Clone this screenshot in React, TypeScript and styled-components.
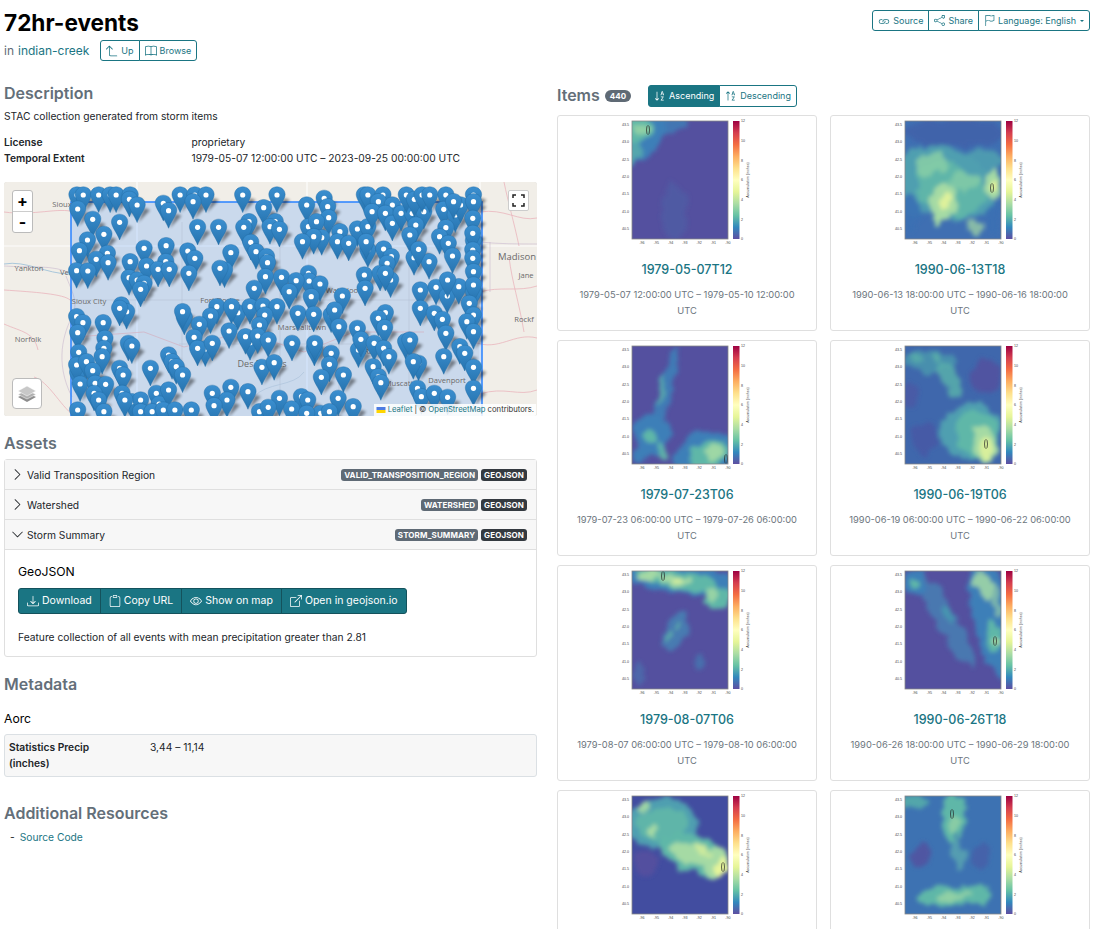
import React from "react";
import styled, { createGlobalStyle } from "styled-components";
import {
  BsArrow90DegUp,
  BsBook,
  BsBoxArrowUpRight,
  BsChevronDown,
  BsChevronRight,
  BsClipboard,
  BsDownload,
  BsEye,
  BsFlag,
  BsLink,
  BsShare,
  BsSortAlphaDown,
  BsSortAlphaUp,
} from "react-icons/bs";

const TEAL = "#1a7583";

const GlobalStyle = createGlobalStyle`
  html, body { margin: 0; padding: 0; background: #fff; }
  body {
    font-family: Inter, "Liberation Sans", sans-serif;
    font-size: 10.25px;
    line-height: 16px;
    color: #212529;
    overflow: hidden;
  }
  a { color: ${TEAL}; text-decoration: none; }
`;

const Page = styled.div`
  width: 1086px;
  height: 929px;
  padding: 0 6px 0 4px;
  overflow: hidden;
`;

const Header = styled.header`
  display: flex;
  justify-content: space-between;
  align-items: flex-start;
  height: 83px;
`;

const Title = styled.h1`
  margin: 8px 0 0;
  font-size: 22.6px;
  line-height: 29px;
  font-weight: 700;
  color: #000;
`;

const Parent = styled.div`
  display: flex;
  align-items: center;
  margin-top: 3px;
  color: #5f6b75;
  font-size: 12px;
  line-height: 20px;
`;

const ParentLink = styled.a`
  margin-left: 4px;
  margin-right: 11px;
`;

const BtnGroup = styled.div`
  display: inline-flex;
  border-radius: 3px;
`;

const OutlineBtn = styled.span<{ $active?: boolean; $h?: number; $px?: number }>`
  display: inline-flex;
  align-items: center;
  gap: 3px;
  height: ${(p) => p.$h ?? 21}px;
  box-sizing: border-box;
  padding: 0 ${(p) => p.$px ?? 5}px;
  border: 1px solid ${TEAL};
  margin-left: -1px;
  background: ${(p) => (p.$active ? TEAL : "#fff")};
  color: ${(p) => (p.$active ? "#fff" : TEAL)};
  font-size: 9px;
  white-space: nowrap;
  &:first-child { margin-left: 0; border-radius: 3px 0 0 3px; }
  &:last-child { border-radius: 0 3px 3px 0; }
  svg { flex: none; }
`;

const Caret = styled.i`
  width: 0;
  height: 0;
  margin-left: 1px;
  border-top: 2.5px solid ${TEAL};
  border-left: 2.5px solid transparent;
  border-right: 2.5px solid transparent;
`;

const Actions = styled(BtnGroup)`
  margin-top: 10px;
`;

const Columns = styled.div`
  display: grid;
  grid-template-columns: 533px 533px;
  column-gap: 20px;
`;

const Column = styled.section``;

const SectionTitle = styled.h2<{ $top?: number }>`
  margin: ${(p) => p.$top ?? 0}px 0 0;
  font-size: 16px;
  line-height: 20px;
  font-weight: 600;
  color: #646f79;
`;

const Paragraph = styled.p`
  margin: 5px 0 0;
`;

const InfoGrid = styled.dl`
  display: grid;
  grid-template-columns: 187.5px 1fr;
  margin: 10px 0 0;
`;

const Term = styled.dt`
  font-weight: 600;
`;

const Detail = styled.dd`
  margin: 0;
`;

const MapFrame = styled.div`
  position: relative;
  height: 234px;
  margin-top: 16px;
  border-radius: 3px;
  box-shadow: inset 0 0 0 1px #ddd;
  overflow: hidden;
  background: #f2efe9;
  svg.map { display: block; }
`;

const ZoomControl = styled.div`
  position: absolute;
  top: 8px;
  left: 8px;
  width: 21px;
  box-sizing: border-box;
  border: 1px solid #bbb;
  border-radius: 3px;
  background: #fff;
  color: #000;
  font-weight: 700;
  text-align: center;
`;

const ZoomButton = styled.div`
  height: 20px;
  line-height: 20px;
  font-size: 16px;
  & + & { border-top: 1px solid #ccc; }
`;

const FullscreenBtn = styled.div`
  position: absolute;
  top: 8px;
  right: 8px;
  width: 21px;
  height: 21px;
  box-sizing: border-box;
  display: flex;
  align-items: center;
  justify-content: center;
  background: #fff;
  border: 1px solid #ccc;
  border-radius: 2px;
`;

const LayersBtn = styled.div`
  position: absolute;
  left: 8px;
  bottom: 7px;
  width: 30px;
  height: 31px;
  box-sizing: border-box;
  display: flex;
  align-items: center;
  justify-content: center;
  background: #fff;
  border: 1px solid #bbb;
  border-radius: 4px;
`;

const Attribution = styled.div`
  position: absolute;
  right: 1px;
  bottom: 0;
  height: 12px;
  padding: 0 2px;
  display: flex;
  align-items: center;
  gap: 2px;
  background: rgba(255, 255, 255, 0.85);
  font-size: 7.7px;
  line-height: 12px;
  color: #333;
`;

const Accordion = styled.div`
  margin-top: 6px;
  border: 1px solid #dfdfdf;
  border-radius: 3px;
`;

const AccordionRow = styled.div`
  display: flex;
  align-items: center;
  height: 29px;
  padding: 0 9px 0 6px;
  background: #f7f7f7;
  border-bottom: 1px solid #dfdfdf;
`;

const RowLabel = styled.span`
  margin-left: 3px;
  flex: 1;
`;

const Badge = styled.span<{ $dark?: boolean }>`
  display: inline-block;
  margin-left: 3px;
  padding: 0 3px;
  height: 12px;
  line-height: 12px;
  border-radius: 3px;
  background: ${(p) => (p.$dark ? "#343a40" : "#5f6a75")};
  color: #fff;
  font-size: 8px;
  font-weight: 700;
  letter-spacing: 0.1px;
`;

const AccordionBody = styled.div`
  padding: 14px 13px 11px;
`;

const AssetTitle = styled.h4`
  margin: 0;
  font-size: 12.2px;
  line-height: 16px;
  font-weight: 400;
  color: #000;
`;

const SolidBtn = styled.span`
  display: inline-flex;
  align-items: center;
  gap: 3px;
  height: 26px;
  padding: 0 8px;
  box-sizing: border-box;
  border: 1px solid #14525c;
  margin-left: -1px;
  background: ${TEAL};
  color: #fff;
  font-size: 10.5px;
  font-weight: 400;
  white-space: nowrap;
  &:first-child { margin-left: 0; border-radius: 3px 0 0 3px; }
  &:last-child { border-radius: 0 3px 3px 0; }
`;

const ToolRow = styled(BtnGroup)`
  display: flex;
  margin-top: 8px;
`;

const AssetNote = styled.p`
  margin: 15px 0 0;
`;

const GroupTitle = styled.h4`
  margin: 16px 0 0;
  font-size: 12.2px;
  line-height: 18px;
  font-weight: 400;
  color: #000;
`;

const MetaBox = styled.div`
  display: grid;
  grid-template-columns: 141px 1fr;
  margin-top: 6px;
  padding: 4px 4px 5px;
  background: #f7f7f7;
  border: 1px solid #dbe0e4;
  border-radius: 3px;
`;

const ResourceList = styled.div`
  margin-top: 6px;
  padding-left: 6px;
  display: flex;
  gap: 5px;
`;

const ItemsBar = styled.div`
  display: flex;
  align-items: center;
  height: 22px;
  margin: 1px 0 9px;
`;

const ItemsTitle = styled.h2`
  margin: 0;
  font-size: 16px;
  line-height: 20px;
  font-weight: 600;
  color: #646f79;
`;

const CountPill = styled.span`
  margin: 1px 17px 0 5px;
  padding: 0 5px;
  height: 12px;
  line-height: 12px;
  border-radius: 7px;
  background: #5f6a75;
  color: #fff;
  font-size: 8px;
  font-weight: 700;
`;

const SortGroup = styled(BtnGroup)`
  margin-top: 1px;
`;

const CardGrid = styled.div`
  display: grid;
  grid-template-columns: 260px 260px;
  justify-content: space-between;
  row-gap: 9px;
`;

const Card = styled.article`
  height: 216px;
  box-sizing: border-box;
  border: 1px solid #dfdfdf;
  border-radius: 3px;
  text-align: center;
  padding-top: 1px;
  svg { display: block; margin: 0 auto; }
`;

const CardTitle = styled.h5`
  margin: 17px 0 0;
  font-size: 12.5px;
  line-height: 16px;
  font-weight: 500;
  color: ${TEAL};
`;

const CardDates = styled.p`
  margin: 9px 0 0;
  padding: 0 16px;
  color: #6c757d;
  font-size: 9.3px;
`;

/* map drawing */

// marker centres read off the reference, in a 3x crop of the map
const PIN_DOTS: [number, number][] = [
  [223,45],[241,45],[285,45],[318,45],[335,45],[375,45],[373,58],[395,75],[225,87],[268,118],[345,127],[253,180],[300,163],[230,212],[310,220],[278,238],[312,248],[222,272],[254,273],[375,245],[415,205],[478,197],[540,213],[560,235],[422,258],[477,245],[455,268],[487,268],[543,280],[372,293],[395,300],[415,310],[405,328],
  [518,45],[560,45],[592,45],[555,65],[470,70],[485,92],[568,142],[628,142],[697,45],[795,45],[757,83],[880,75],[930,55],[940,80],[943,113],[715,125],[700,142],[790,125],[775,140],[802,148],[885,140],[908,125],[923,173],[900,170],[868,185],[720,187],[735,215],[765,230],[768,248],[663,218],[645,270],[632,265],[975,155],[1025,147],[1055,140],[968,185],[1000,190],[1045,45],[1055,45],[1098,45],[1085,65],[1067,95],[1125,75],[1105,100],[1125,130],[1150,100],[1182,100],[1215,95],[1165,45],[1188,58],[1210,45],[1232,45],[1278,45],[1272,88],[1305,105],[1320,75],[1300,65],[1357,45],[1357,65],[1355,115],[1192,135],[1175,165],[1278,143],[1260,170],[1285,190],[1357,183],[1355,160],[1355,210],[1355,235],[1297,228],[1230,245],[1187,233],[1200,208],[1055,210],[1050,185],[1100,207],[1122,230],[1110,250],[1045,285],[1090,280],[1120,300],[1105,280],[1047,325],
  [762,290],[808,292],[885,280],[887,303],[850,302],[918,312],[830,335],[893,350],[730,325],[982,348],[1205,330],[1250,322],[1282,348],[1315,320],[1283,300],[1357,275],[1357,335],[1357,315],
  [350,375],[365,395],[345,385],[623,380],[605,408],[530,412],[525,395],[683,398],[665,380],[718,380],[755,378],[795,380],[760,405],[745,435],[855,400],[900,403],[950,405],[960,390],[972,440],[1025,445],[1105,398],[1085,415],[1103,443],[1205,385],[1245,400],[1268,418],[1345,370],[1357,405],[1338,425],[1357,455],[1278,460],
  [222,410],[240,428],[225,458],[298,428],[303,475],[300,505],[228,517],[295,530],[370,490],[380,498],[573,433],[658,453],[558,472],[590,507],[568,505],[610,490],[718,488],[705,470],[740,468],[770,480],[838,490],[902,505],[903,490],[950,520],[945,553],[922,592],[985,585],[1028,510],[1035,478],[1073,490],[1100,505],[1115,530],[1163,485],[1175,480],[1200,550],[1185,545],[1272,530],[1318,500],[1332,520],[1357,562],
  [433,565],[485,525],[495,545],[507,560],[525,585],[345,565],[355,585],[225,578],[222,555],[250,545],[268,572],[232,612],[275,610],[305,613],[272,640],[285,660],[352,640],[380,665],[405,660],[360,660],[450,640],[458,672],[485,630],[610,640],[663,622],[652,660],[615,677],[712,635],[802,655],[865,650],[883,660],[752,562],[787,548],[970,655],[1013,680],[1070,560],[1085,590],[1092,608],[1197,625],[1208,650],[1245,640],[1283,652],[1357,625],
  [225,690],[300,695],[405,695],[438,695],[470,690],[503,690],[550,690],[745,695],[770,682],[837,687],[920,700],[945,695],[880,700],
];

const MAP_LABELS: [string, number, number, number?][] = [
  ["Sioux", 58, 25],
  ["Madison", 513, 78, 9.5],
  ["Yankton", 25, 89],
  ["Ver", 62, 93],
  ["Sioux City", 85, 122],
  ["Fort Dodge", 216, 121],
  ["Marshalltown", 298, 148],
  ["Des Moines", 258, 185, 9],
  ["Norfolk", 24, 160],
  ["Waterloo", 338, 111],
  ["Rapids", 372, 172],
  ["Davenport", 443, 201],
  ["Muscatine", 399, 204],
  ["Rockf", 520, 140],
  ["Jane", 522, 96],
];

const toMapX = (x: number) => x / 2.86 - 5;
const toMapY = (y: number) => y / 3 - 2;

function LeafletMap() {
  return (
    <svg className="map" width="533" height="234" viewBox="0 0 533 234">
      <defs>
        <linearGradient id="pinFill" x1="0" y1="0" x2="0" y2="1">
          <stop offset="0" stopColor="#3b8fd0" />
          <stop offset="1" stopColor="#2673ae" />
        </linearGradient>
        <filter id="pinShadow" x="-50%" y="-50%" width="200%" height="200%">
          <feGaussianBlur stdDeviation="1.5" />
        </filter>
        <g id="pin">
          <path
            d="M0 -8.2C-4.8 -8.2 -8.2 -4.6 -8.2 -.4C-8.2 4 -2.5 11 0 17.6C2.5 11 8.2 4 8.2 -.4C8.2 -4.6 4.8 -8.2 0 -8.2Z"
            fill="url(#pinFill)"
            stroke="#2269a1"
            strokeWidth=".4"
          />
          <circle r="2.6" fill="#fff" />
        </g>
      </defs>
      <rect width="533" height="234" fill="#f1eee8" />
      <g fill="none" stroke="#fff" strokeWidth="1.2" opacity=".85">
        <path d="M0 64H533M133 0V234M303 0V234M476 0V234" />
      </g>
      <g fill="none" stroke="#eab5bd" strokeWidth=".8">
        <path d="M0 30C30 34 55 25 70 30M0 108C30 110 60 112 66 118M0 142C18 150 30 150 34 168M476 30C500 26 515 40 533 36M476 110C495 104 515 110 533 104M470 160C495 170 510 150 533 156M476 212C500 204 515 215 533 208M30 195C45 200 55 222 70 234" />
        <path d="M500 0C504 20 510 40 515 64M505 75C508 100 515 120 520 150" />
      </g>
      <g fill="none" stroke="#c9b8cf" strokeWidth=".6">
        <path d="M0 84C25 86 50 82 68 92M62 94C68 110 75 120 68 135C60 150 50 180 68 215" />
        <path d="M476 60C495 62 515 62 533 62M486 60V110" />
      </g>
      <path d="M0 82C22 78 42 92 66 92" fill="none" stroke="#a9c7db" strokeWidth="1" />
      <rect x="67" y="20" width="411" height="220" fill="#3388ff" fillOpacity=".2" stroke="#3388ff" strokeWidth="1.6" />
      <g fill="none" stroke="#b6c3d6" strokeWidth=".6">
        <path d="M68 118H468M175 162H380M178 40V190M276 60V234M335 110V234M405 80V200" />
        <path d="M250 215C262 200 290 205 300 190M450 60C440 100 470 120 470 150" stroke="#a7bfd8" />
        <path d="M70 155L140 150L180 165L240 150L300 170L350 150L420 150" stroke="#d5a9b8" />
      </g>
      <g fontSize="7.6" fill="#6a6a6a" fontFamily="'Open Sans', sans-serif">
        {MAP_LABELS.map(([text, x, y, size]) => (
          <text key={text} x={x} y={y} textAnchor="middle" fontSize={size}>
            {text}
          </text>
        ))}
      </g>
      <g fill="#000" opacity=".46" filter="url(#pinShadow)">
        {PIN_DOTS.map(([x, y], i) => (
          <path
            key={i}
            d={`M${toMapX(x) + 1} ${toMapY(y) + 17.5}L${toMapX(x) + 7} ${toMapY(y) + 3}L${toMapX(x) + 13} ${toMapY(y) + 5}Z`}
          />
        ))}
      </g>
      {PIN_DOTS.map(([x, y], i) => (
        <use key={i} href="#pin" x={toMapX(x)} y={toMapY(y)} />
      ))}
    </svg>
  );
}

/* storm plots */

const C0 = "#54509f";
const C1 = "#3d7fb8";
const C2 = "#5fb7a8";
const C3 = "#a5daa4";
const C4 = "#e5f49a";

type Blob = [number, number, number, number, number, string, number?];

type Plot = {
  id: string;
  title?: string;
  dates?: string;
  base: string;
  contour: [number, number];
  blobs: Blob[];
};

// the last row is cut by the bottom of the window, only the plots show
const PLOTS: Plot[] = [
  {
    id: "a",
    title: "1979-05-07T12",
    dates: "1979-05-07 12:00:00 UTC – 1979-05-10 12:00:00 UTC",
    base: C0,
    contour: [16, 9],
    blobs: [
      [8, 8, 24, 40, 28, C1, 1],
      [34, 2, 22, 9, 0, C1, 0.8],
      [2, 6, 18, 16, 20, C2, 1],
      [12, 6, 10, 10, 0, C2, 0.9],
      [3, 30, 8, 14, 20, C2, 0.7],
      [10, 7, 8, 6, 0, C3, 0.7],
      [42, 90, 12, 30, 0, "#4a63a8", 0.5],
    ],
  },
  {
    id: "b",
    title: "1990-06-13T18",
    dates: "1990-06-13 18:00:00 UTC – 1990-06-16 18:00:00 UTC",
    base: "#3f6fb2",
    contour: [87, 67],
    blobs: [
      [50, 12, 50, 14, 0, "#4062aa", 0.9],
      [12, 66, 20, 30, 0, "#4f9fb0", 0.9],
      [72, 42, 26, 14, 0, "#4f9fb0", 0.9],
      [42, 62, 50, 34, 25, "#4f9fb0", 1],
      [45, 68, 36, 26, 25, C2, 0.9],
      [26, 42, 16, 12, 0, "#85cca6", 0.9],
      [38, 82, 13, 20, 20, C3, 1],
      [41, 80, 5, 9, 20, C4, 0.9],
      [60, 60, 14, 10, 0, "#85cca6", 0.8],
      [88, 66, 9, 16, 0, C3, 1],
      [92, 66, 4, 7, 0, C4, 1],
      [70, 108, 8, 8, 0, C3, 0.7],
      [6, 90, 10, 18, 0, "#3a70b4", 0.9],
      [88, 98, 8, 14, 0, "#3a70b4", 0.9],
    ],
  },
  {
    id: "c",
    title: "1979-07-23T06",
    dates: "1979-07-23 06:00:00 UTC – 1979-07-26 06:00:00 UTC",
    base: C0,
    contour: [94, 113],
    blobs: [
      [32, 50, 7, 50, 15, C1, 0.9],
      [30, 45, 3.5, 14, 15, C2, 0.7],
      [20, 88, 18, 20, 0, C1, 1],
      [18, 91, 7, 7, 0, C2, 1],
      [30, 105, 4, 11, -20, C2, 0.9],
      [72, 108, 32, 22, -10, C1, 1],
      [78, 108, 22, 12, -15, C2, 1],
      [84, 106, 11, 7, -15, C3, 0.9],
      [8, 108, 7, 10, 0, C1, 1],
    ],
  },
  {
    id: "d",
    title: "1990-06-19T06",
    dates: "1990-06-19 06:00:00 UTC – 1990-06-22 06:00:00 UTC",
    base: "#3f67ac",
    contour: [81, 98],
    blobs: [
      [25, 15, 26, 12, 0, "#4a98ae", 0.8],
      [12, 12, 9, 6, 0, C2, 0.6],
      [33, 12, 4, 5, 0, C2, 0.7],
      [46, 35, 7, 20, -30, "#58aeaa", 0.85],
      [66, 85, 30, 28, -30, "#4f9fb0", 1],
      [72, 88, 22, 24, -30, C2, 1],
      [80, 98, 12, 18, -20, C3, 1],
      [82, 102, 6, 12, -10, C4, 0.8],
      [20, 92, 14, 16, 0, "#4a55a4", 0.7],
      [80, 30, 14, 18, 0, C0, 0.8],
      [5, 50, 8, 14, 0, C0, 0.5],
    ],
  },
  {
    id: "e",
    title: "1979-08-07T06",
    dates: "1979-08-07 06:00:00 UTC – 1979-08-10 06:00:00 UTC",
    base: C0,
    contour: [31, 5],
    blobs: [
      [48, 8, 60, 15, 8, C1, 1],
      [45, 9, 40, 9, 12, C2, 1],
      [85, 26, 14, 10, 30, C2, 1],
      [18, 5, 14, 4, 0, C3, 1],
      [44, 10, 14, 5, 0, C3, 1],
      [45, 10, 5, 2.5, 0, C4, 0.9],
      [80, 22, 7, 5, 0, C3, 0.8],
      [44, 60, 11, 20, 30, "#4486b5", 0.8],
      [36, 65, 3, 6, 30, C2, 0.7],
      [46, 56, 2.5, 5, 30, C2, 0.7],
      [66, 90, 5, 8, 0, "#4477b0", 0.8],
      [8, 100, 5, 12, 0, "#4877b0", 0.6],
    ],
  },
  {
    id: "f",
    title: "1990-06-26T18",
    dates: "1990-06-26 18:00:00 UTC – 1990-06-29 18:00:00 UTC",
    base: C0,
    contour: [90, 70],
    blobs: [
      [85, 42, 18, 66, -12, C1, 1],
      [42, 50, 11, 52, -30, "#4a78b0", 1],
      [10, 12, 12, 13, 0, C1, 1],
      [10, 14, 5, 5, 0, C2, 1],
      [78, 14, 9, 16, -25, C3, 0.85],
      [92, 30, 4, 13, 0, C3, 0.6],
      [88, 66, 7, 16, 0, C2, 1],
      [90, 68, 3.5, 5, 0, C3, 1],
      [42, 42, 5, 10, -30, "#45a0b0", 0.7],
    ],
  },
  {
    id: "g",
    base: "#424da0",
    contour: [91, 71],
    blobs: [
      [30, 28, 36, 26, 0, "#4f9fb0", 1],
      [30, 28, 26, 16, 0, C2, 0.9],
      [12, 10, 6, 5, 0, C3, 0.9],
      [22, 34, 4, 5, 0, C3, 1],
      [62, 58, 36, 18, 18, C2, 1],
      [60, 58, 22, 10, 15, C3, 1],
      [85, 66, 13, 15, 0, C3, 1],
      [90, 70, 6, 10, 0, C4, 1],
      [70, 55, 9, 4, 20, C4, 0.6],
      [12, 68, 11, 13, 0, C0, 0.9],
    ],
  },
  {
    id: "h",
    base: "#3d72b2",
    contour: [47, 18],
    blobs: [
      [48, 22, 12, 24, 0, C2, 1],
      [50, 30, 5, 10, 0, C3, 0.6],
      [10, 6, 16, 7, 0, "#55acaa", 0.9],
      [50, 100, 38, 10, -4, C2, 1],
      [50, 100, 18, 4, -4, C3, 0.7],
      [16, 60, 10, 12, 0, C0, 0.8],
      [75, 60, 10, 12, 0, "#4560a8", 0.9],
      [54, 60, 6, 16, 0, "#5aa8b0", 0.8],
    ],
  },
];

const PLOT_X = 30;
const PLOT_Y = 4;
const PLOT_W = 96;
const PLOT_H = 118;

function StormPlot({ plot, index }: { plot: Plot; index: number }) {
  const clipId = `clip${index}`;
  const blurId = `blur${index}`;
  const barId = `bar${index}`;
  return (
    <svg width="170" height="128" viewBox="0 0 170 128">
      <defs>
        <clipPath id={clipId}>
          <rect width={PLOT_W} height={PLOT_H} />
        </clipPath>
        <filter id={blurId} x="-30%" y="-30%" width="160%" height="160%">
          <feTurbulence type="fractalNoise" baseFrequency=".07" numOctaves="3" seed={index + 3} result="noise" />
          <feDisplacementMap in="SourceGraphic" in2="noise" scale="14" xChannelSelector="R" yChannelSelector="G" />
          <feGaussianBlur stdDeviation="2" />
        </filter>
        <linearGradient id={barId} x1="0" y1="1" x2="0" y2="0">
          <stop offset="0" stopColor="#5e4fa2" />
          <stop offset=".1" stopColor="#3288bd" />
          <stop offset=".2" stopColor="#66c2a5" />
          <stop offset=".3" stopColor="#abdda4" />
          <stop offset=".4" stopColor="#e6f598" />
          <stop offset=".5" stopColor="#ffffbf" />
          <stop offset=".6" stopColor="#fee08b" />
          <stop offset=".7" stopColor="#fdae61" />
          <stop offset=".8" stopColor="#f46d43" />
          <stop offset=".9" stopColor="#d53e4f" />
          <stop offset="1" stopColor="#9e0142" />
        </linearGradient>
      </defs>
      <g transform={`translate(${PLOT_X} ${PLOT_Y})`}>
        <g clipPath={`url(#${clipId})`}>
          <rect width={PLOT_W} height={PLOT_H} fill={plot.base} />
          <g filter={`url(#${blurId})`}>
            {plot.blobs.map(([cx, cy, rx, ry, rot, fill, op], i) => (
              <ellipse
                key={i}
                cx={cx}
                cy={cy}
                rx={rx}
                ry={ry}
                fill={fill}
                opacity={op ?? 1}
                transform={`rotate(${rot} ${cx} ${cy})`}
              />
            ))}
          </g>
          <ellipse
            cx={plot.contour[0]}
            cy={plot.contour[1]}
            rx="1.5"
            ry="4.5"
            fill="none"
            stroke="#222"
            strokeWidth=".7"
          />
        </g>
        <rect width={PLOT_W} height={PLOT_H} fill="none" stroke="#888" strokeWidth=".8" />
        <g fontSize="3.6" fill="#444" fontFamily="'Liberation Sans', sans-serif">
          {["43.5", "43.0", "42.5", "42.0", "41.5", "41.0", "40.5"].map((t, i) => (
            <text key={t} x="-3" y={5 + i * 17.35} textAnchor="end">
              {t}
            </text>
          ))}
          {["-96", "-95", "-94", "-93", "-92", "-91", "-90"].map((t, i) => (
            <text key={t} x={10 + i * 14.3} y={PLOT_H + 5} textAnchor="middle">
              {t}
            </text>
          ))}
          <rect x={PLOT_W + 5} y="0" width="6.5" height={PLOT_H} fill={`url(#${barId})`} />
          {[0, 2, 4, 6, 8, 10, 12].map((t) => (
            <text key={t} x={PLOT_W + 13} y={PLOT_H - (t / 12) * PLOT_H + 1.4}>
              {t}
            </text>
          ))}
          <text
            transform={`translate(${PLOT_W + 21} ${PLOT_H / 2}) rotate(-90)`}
            textAnchor="middle"
          >
            Accumulation (inches)
          </text>
        </g>
      </g>
    </svg>
  );
}

export default function App() {
  return (
    <Page>
      <GlobalStyle />
      <Header>
        <div>
          <Title>72hr-events</Title>
          <Parent>
            in <ParentLink href="#">indian-creek</ParentLink>
            <BtnGroup>
              <OutlineBtn $px={5}>
                <BsArrow90DegUp size={12} /> Up
              </OutlineBtn>
              <OutlineBtn>
                <BsBook size={12} /> Browse
              </OutlineBtn>
            </BtnGroup>
          </Parent>
        </div>
        <Actions>
          <OutlineBtn>
            <BsLink size={12} /> Source
          </OutlineBtn>
          <OutlineBtn>
            <BsShare size={11} /> Share
          </OutlineBtn>
          <OutlineBtn>
            <BsFlag size={11} /> Language: English <Caret />
          </OutlineBtn>
        </Actions>
      </Header>
      <Columns>
        <Column>
          <SectionTitle>Description</SectionTitle>
          <Paragraph>STAC collection generated from storm items</Paragraph>
          <InfoGrid>
            <Term>License</Term>
            <Detail>proprietary</Detail>
            <Term>Temporal Extent</Term>
            <Detail>1979-05-07 12:00:00 UTC – 2023-09-25 00:00:00 UTC</Detail>
          </InfoGrid>
          <MapFrame>
            <LeafletMap />
            <ZoomControl>
              <ZoomButton>+</ZoomButton>
              <ZoomButton>-</ZoomButton>
            </ZoomControl>
            <FullscreenBtn>
              <svg width="13" height="13" viewBox="0 0 13 13" fill="none" stroke="#222" strokeWidth="1.5">
                <path d="M1 4V1H4M9 1H12V4M12 9V12H9M4 12H1V9" />
              </svg>
            </FullscreenBtn>
            <LayersBtn>
              <svg width="20" height="20" viewBox="0 0 20 20">
                <path d="M10 9L19 13L10 18L1 13Z" fill="#8d8d8d" />
                <path d="M10 6L19 10.5L10 15L1 10.5Z" fill="#b0b0b0" stroke="#fff" strokeWidth=".5" />
                <path d="M10 2L19 7L10 12L1 7Z" fill="#c8c8c8" stroke="#fff" strokeWidth=".5" />
              </svg>
            </LayersBtn>
            <Attribution>
              <svg width="10" height="6" viewBox="0 0 12 8">
                <rect width="12" height="4" fill="#4C7BE1" />
                <rect y="4" width="12" height="4" fill="#FFD500" />
              </svg>
              <a href="#">Leaflet</a> | © <a href="#">OpenStreetMap</a> contributors.
            </Attribution>
          </MapFrame>
          <SectionTitle $top={17}>Assets</SectionTitle>
          <Accordion>
            <AccordionRow>
              <BsChevronRight size={13} />
              <RowLabel>Valid Transposition Region</RowLabel>
              <Badge>VALID_TRANSPOSITION_REGION</Badge>
              <Badge $dark>GEOJSON</Badge>
            </AccordionRow>
            <AccordionRow>
              <BsChevronRight size={13} />
              <RowLabel>Watershed</RowLabel>
              <Badge>WATERSHED</Badge>
              <Badge $dark>GEOJSON</Badge>
            </AccordionRow>
            <AccordionRow>
              <BsChevronDown size={13} />
              <RowLabel>Storm Summary</RowLabel>
              <Badge>STORM_SUMMARY</Badge>
              <Badge $dark>GEOJSON</Badge>
            </AccordionRow>
            <AccordionBody>
              <AssetTitle>GeoJSON</AssetTitle>
              <ToolRow>
                <SolidBtn>
                  <BsDownload size={12} /> Download
                </SolidBtn>
                <SolidBtn>
                  <BsClipboard size={12} /> Copy URL
                </SolidBtn>
                <SolidBtn>
                  <BsEye size={12} /> Show on map
                </SolidBtn>
                <SolidBtn>
                  <BsBoxArrowUpRight size={12} /> Open in geojson.io
                </SolidBtn>
              </ToolRow>
              <AssetNote>Feature collection of all events with mean precipitation greater than 2.81</AssetNote>
            </AccordionBody>
          </Accordion>
          <SectionTitle $top={17}>Metadata</SectionTitle>
          <GroupTitle>Aorc</GroupTitle>
          <MetaBox>
            <Term>
              Statistics Precip
              <br />
              (inches)
            </Term>
            <Detail>3,44 – 11,14</Detail>
          </MetaBox>
          <SectionTitle $top={26}>Additional Resources</SectionTitle>
          <ResourceList>
            <span>-</span>
            <a href="#">Source Code</a>
          </ResourceList>
        </Column>
        <Column>
          <ItemsBar>
            <ItemsTitle>Items</ItemsTitle>
            <CountPill>440</CountPill>
            <SortGroup>
              <OutlineBtn $active $h={22} $px={5}>
                <BsSortAlphaDown size={12} /> Ascending
              </OutlineBtn>
              <OutlineBtn $h={22} $px={5}>
                <BsSortAlphaUp size={12} /> Descending
              </OutlineBtn>
            </SortGroup>
          </ItemsBar>
          <CardGrid>
            {PLOTS.map((plot, i) => (
              <Card key={plot.id}>
                <StormPlot plot={plot} index={i} />
                {plot.title && <CardTitle>{plot.title}</CardTitle>}
                {plot.dates && <CardDates>{plot.dates}</CardDates>}
              </Card>
            ))}
          </CardGrid>
        </Column>
      </Columns>
    </Page>
  );
}
